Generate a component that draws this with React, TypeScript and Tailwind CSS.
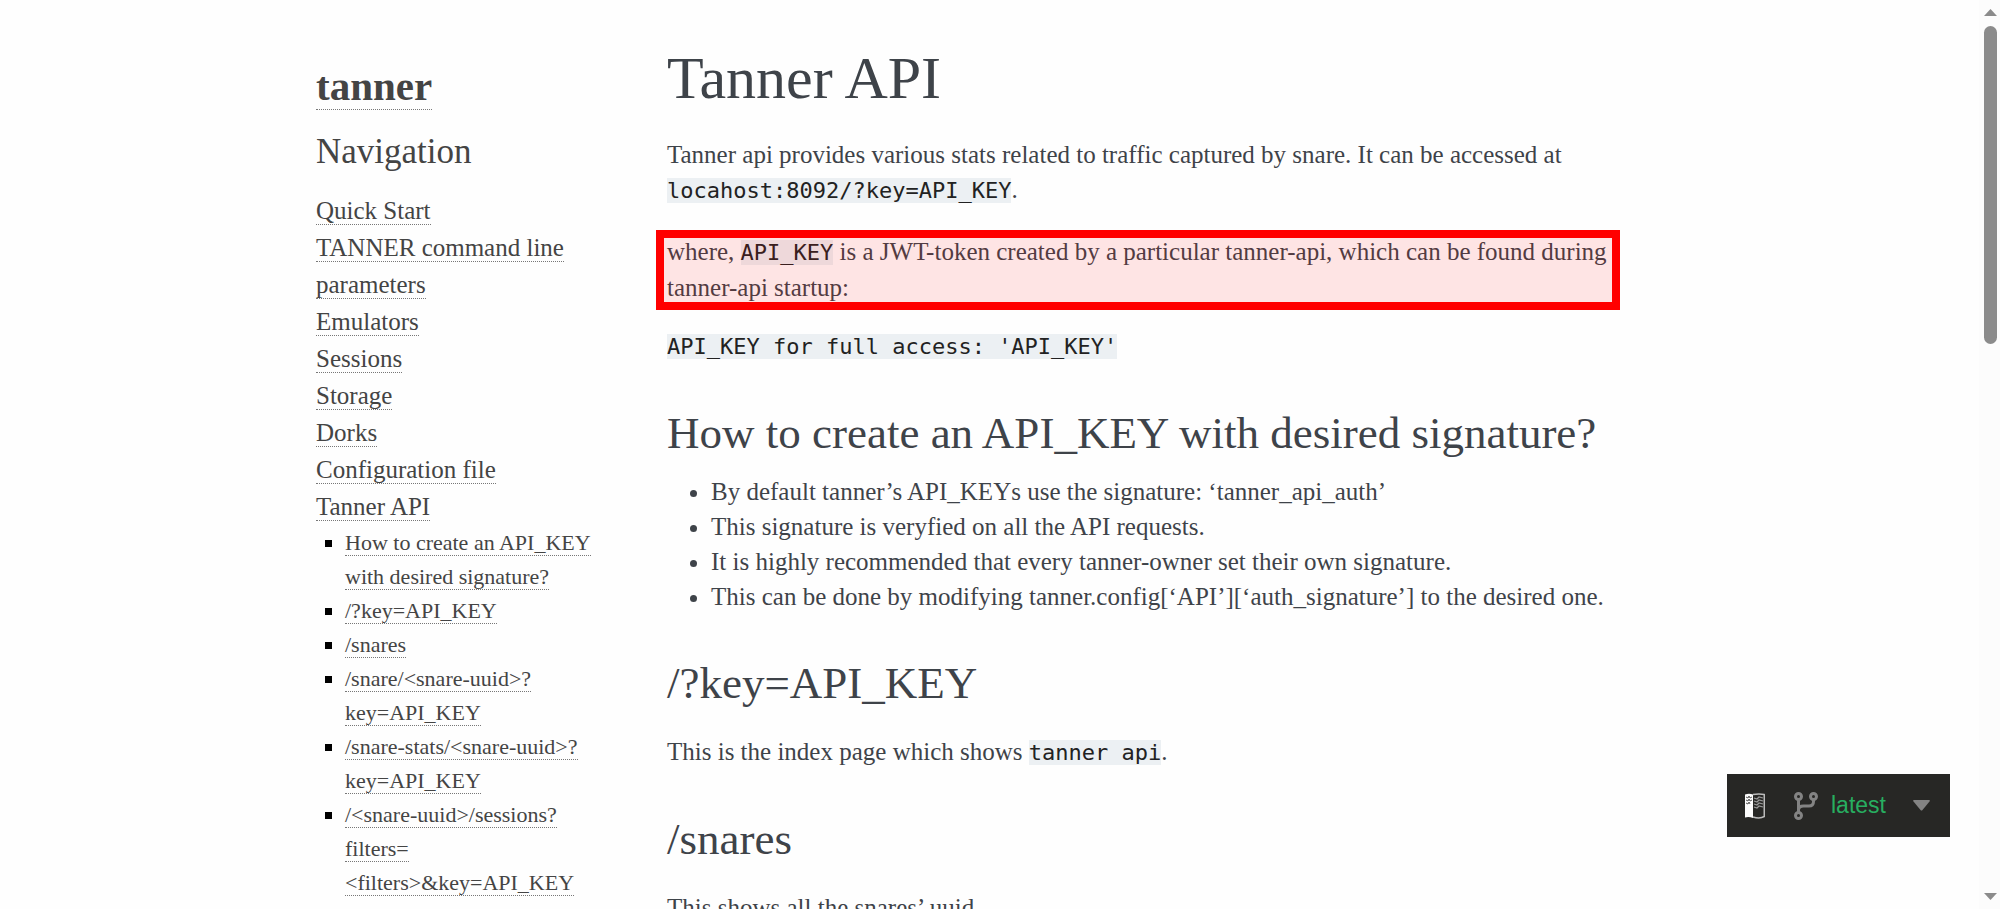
import type { ReactNode } from "react";

const pages = [
  "Quick Start",
  "TANNER command line parameters",
  "Emulators",
  "Sessions",
  "Storage",
  "Dorks",
  "Configuration file",
  "Tanner API",
];

const sections = [
  "How to create an API_KEY with desired signature?",
  "/?key=API_KEY",
  "/snares",
  "/snare/<snare-uuid>?key=API_KEY",
  "/snare-stats/<snare-uuid>?key=API_KEY",
  "/<snare-uuid>/sessions?filters=<filters>&key=API_KEY",
  "/api/session/<sess-uuid>?key=API_KEY",
];

const notes = [
  "By default tanner’s API_KEYs use the signature: ‘tanner_api_auth’",
  "This signature is veryfied on all the API requests.",
  "It is highly recommended that every tanner-owner set their own signature.",
  "This can be done by modifying tanner.config[‘API’][‘auth_signature’] to the desired one.",
];

function NavLink({ children }: { children: ReactNode }) {
  return (
    <a href="#" className="border-b border-dotted border-[#777]">
      {children}
    </a>
  );
}

function Code({ children }: { children: ReactNode }) {
  return (
    <code className="bg-[#ecf0f3] font-['DejaVu_Sans_Mono',monospace] text-[22px] text-[#222]">
      {children}
    </code>
  );
}

function Heading({ children }: { children: ReactNode }) {
  return <h2 className="mt-[38px] text-[45px] leading-[63px]">{children}</h2>;
}

function Sidebar() {
  return (
    <nav aria-label="Documentation" className="w-[296px] shrink-0 pt-[60px] text-[#444]">
      <p className="text-[41px] leading-[53px] font-bold">
        <NavLink>tanner</NavLink>
      </p>
      <h3 className="mt-3 text-[35px] leading-[53px]">Navigation</h3>
      <ul className="mt-[14px] text-[25px] leading-[37px]">
        {pages.map((page) => (
          <li key={page}>
            <NavLink>{page}</NavLink>
          </li>
        ))}
      </ul>
      <ul className="mt-px ml-[29px] list-[square] text-[22px] leading-[34px] marker:text-black">
        {sections.map((section) => (
          <li key={section}>
            <NavLink>{section}</NavLink>
          </li>
        ))}
      </ul>
    </nav>
  );
}

function VersionMenu() {
  return (
    <button
      type="button"
      aria-label="Documentation version"
      className="absolute right-[50px] bottom-[72px] flex h-[63px] w-[223px] items-center bg-[#272725] pl-[18px] font-['Liberation_Sans',sans-serif] text-[23px] text-[#27ae60]"
    >
      <svg width="20" height="26" viewBox="0 0 20 26" aria-hidden="true">
        <path d="M0 1.500 Q4 0 8 1.500 V25 Q4 23.500 0 24.500Z" fill="#fcfcfc" />
        <path d="M1 4l2 1 1-2 1 2 2-1M1 7l2 1 1-2 1 2 2-1M1 10l2 1 1-2 1 2" fill="none" stroke="#555" />
        <path d="M8 1.500 Q14 .5 19.250 1.500 V23.500 Q15 26 8 24" fill="none" stroke="#bbb" strokeWidth="1.500" />
        <path d="M9 5l3 1 2-2 4 1M9 8l3 1 2-2 4 1M9 11l3 1 2-2 4 1M9 14l3 1 2-2 4 1" fill="none" stroke="#999" strokeWidth="1.250" />
      </svg>
      <svg className="ml-[29px]" width="24" height="28" viewBox="0 0 24 28" fill="none" stroke="#838383" aria-hidden="true">
        <g strokeWidth="3">
          <circle cx="4.500" cy="4.500" r="3" />
          <circle cx="19.500" cy="4.500" r="3" />
          <circle cx="4.500" cy="23.500" r="3" />
        </g>
        <path d="M4.500 8v12M19.500 8v1.500q0 4.500-4.500 4.500H9.500q-5 0-5 4" strokeWidth="3" />
      </svg>
      <span className="ml-[13px]">latest</span>
      <svg className="ml-[27px]" width="17" height="11" viewBox="0 0 17 11" aria-hidden="true">
        <path d="M1 0h15q1.500 0 .5 1.500L9.500 10q-1 1-2 0L.500 1.500Q-.5 0 1 0z" fill="#838383" />
      </svg>
    </button>
  );
}

function ScrollTrack() {
  return (
    <div aria-hidden="true" className="flex w-[21px] shrink-0 flex-col items-center bg-[#fcfcfc] pt-[9px] pr-[3px] pb-[9px] pl-[5px]">
      <svg width="13" height="7" viewBox="0 0 13 7">
        <path d="M6.500 0L13 7H0z" fill="#8b8b8b" />
      </svg>
      <div className="mt-[10px] h-5/14 w-[13px] rounded-full bg-[#8b8b8b]" />
      <svg className="mt-auto" width="13" height="7" viewBox="0 0 13 7">
        <path d="M0 0h13L6.500 7z" fill="#8b8b8b" />
      </svg>
    </div>
  );
}

export default function App() {
  return (
    <div className="relative flex h-screen overflow-hidden bg-[#fefefe] font-['Liberation_Serif',serif]">
      <div className="min-w-0 flex-1 overflow-hidden">
        <div className="mx-auto flex max-w-[1373px] gap-[55px] pr-11 pl-[13px]">
          <Sidebar />
          <main className="min-w-0 flex-1 pt-9 text-[25px] leading-[35px] text-[#3e4349]">
            <h1 className="text-[60px] leading-[84px]">Tanner API</h1>
            <p className="mt-[17px]">
              Tanner api provides various stats related to traffic captured by snare. It can be
              accessed at <Code>locahost:8092/?key=API_KEY</Code>.
            </p>
            <p className="relative mt-[26px]">
              where, <Code>API_KEY</Code> is a JWT-token created by a particular tanner-api, which
              can be found during tanner-api startup:
              <span className="absolute -top-1 right-[12px] -bottom-[5px] -left-[11px] border-[8px] border-[#ff0000] bg-[#ff0000]/10" />
            </p>
            <p className="mt-[23px]">
              <Code>API_KEY for full access: 'API_KEY'</Code>
            </p>
            <Heading>How to create an API_KEY with desired signature?</Heading>
            <ul className="mt-[9px] ml-11 list-disc">
              {notes.map((note) => (
                <li key={note}>{note}</li>
              ))}
            </ul>
            <Heading>/?key=API_KEY</Heading>
            <p className="mt-[19px]">
              This is the index page which shows <Code>tanner api</Code>.
            </p>
            <Heading>/snares</Heading>
            <p className="mt-[19px]">This shows all the snares’ uuid.</p>
          </main>
        </div>
      </div>
      <ScrollTrack />
      <VersionMenu />
    </div>
  );
}
